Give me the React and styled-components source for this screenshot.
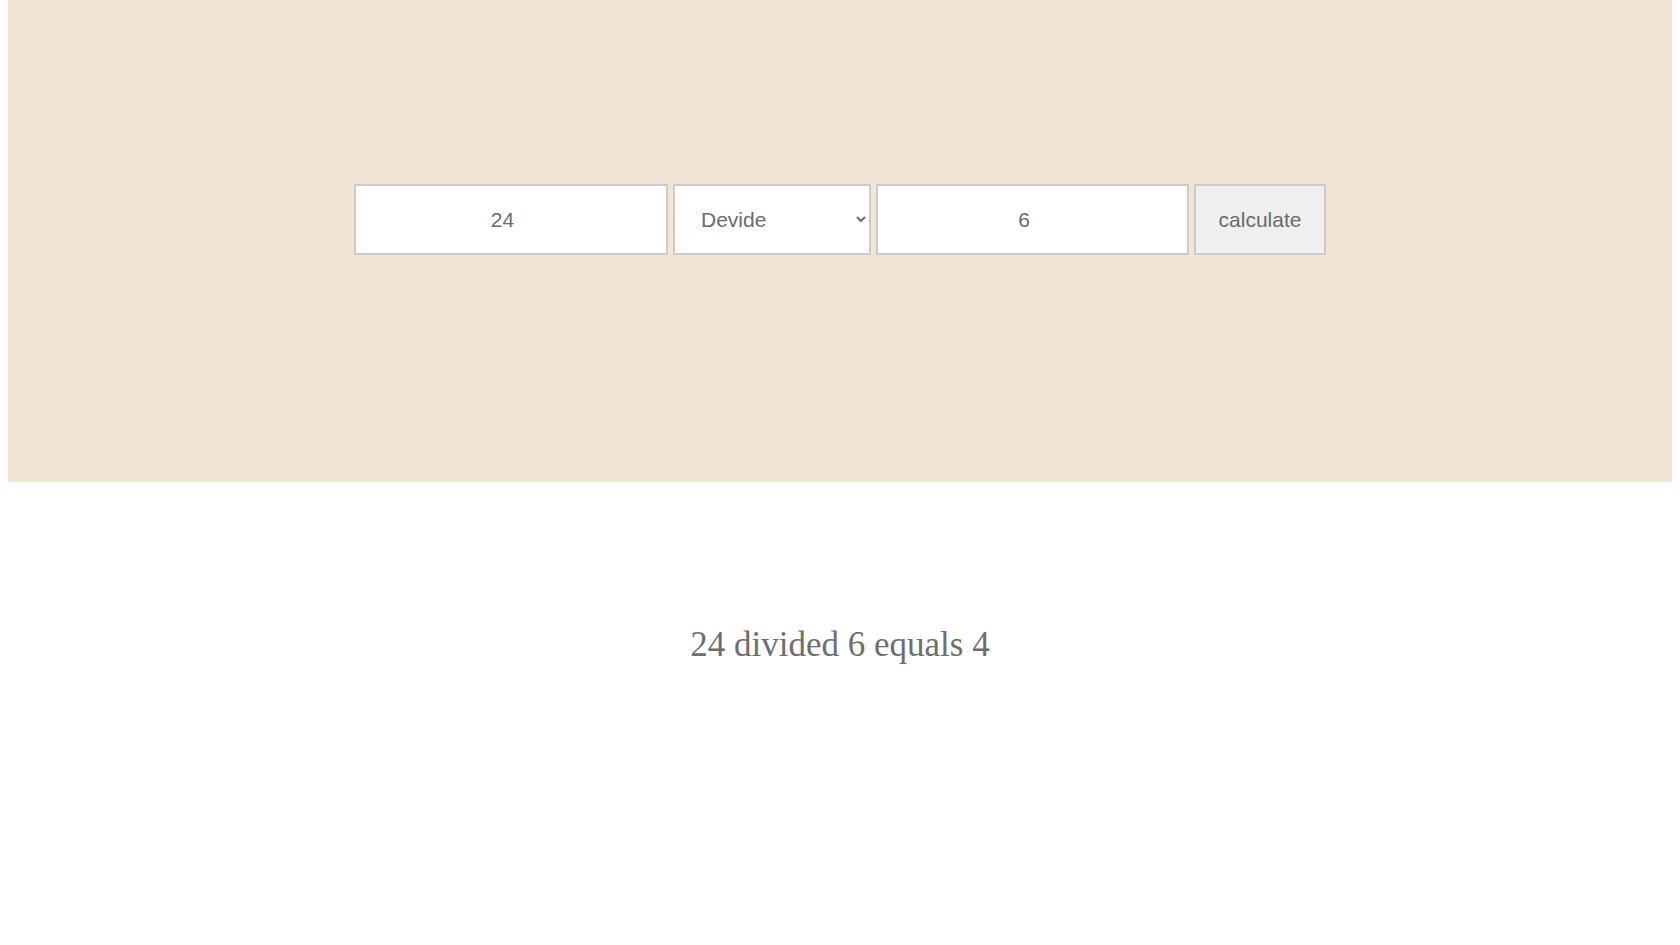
import React, { useState } from "react";
import styled, { createGlobalStyle } from "styled-components";

const GlobalStyle = createGlobalStyle`
  body {
    margin: 0 8px;
    background: #fff;
    font-family: "Liberation Sans", Arial, sans-serif;
  }
`;

const Panel = styled.div`
  height: 482px;
  box-sizing: border-box;
  padding-top: 184px;
  background-color: #f1e6d5;
  display: flex;
  justify-content: center;
  align-items: flex-start;
  gap: 5px;
`;

const Field = styled.input`
  box-sizing: border-box;
  width: ${(p) => p.$width || 314}px;
  height: 71px;
  border: 2px solid #cbcbcb;
  background: #fff;
  color: #6b6b6b;
  font-family: "Liberation Sans", Arial, sans-serif;
  font-size: 21px;
  text-align: center;
  padding: 0 19px 0 2px;
  outline: none;
`;

const Select = styled.select`
  box-sizing: border-box;
  width: 198px;
  height: 71px;
  border: 2px solid #cbcbcb;
  border-radius: 0;
  background: #fff;
  color: #6b6b6b;
  font-family: "Liberation Sans", Arial, sans-serif;
  font-size: 21px;
  padding: 0 4px 0 22px;
  outline: none;
`;

const Button = styled.button`
  box-sizing: border-box;
  width: 132px;
  height: 71px;
  border: 2px solid #cbcbcb;
  border-radius: 0;
  background-color: #efefef;
  color: #6b6b6b;
  font-family: "Liberation Sans", Arial, sans-serif;
  font-size: 21px;
  cursor: pointer;
`;

const Result = styled.p`
  margin: 143px 0 0;
  text-align: center;
  font-family: "Liberation Serif", "Times New Roman", serif;
  font-size: 35px;
  color: #6e6e6e;
`;

const ops = {
  add: { label: "Add", word: "plus", fn: (a, b) => a + b },
  subtract: { label: "Subtract", word: "minus", fn: (a, b) => a - b },
  multiply: { label: "Multiply", word: "times", fn: (a, b) => a * b },
  divide: { label: "Devide", word: "divided", fn: (a, b) => a / b },
};

export default function App() {
  const [first, setFirst] = useState("24");
  const [second, setSecond] = useState("6");
  const [op, setOp] = useState("divide");
  const [result, setResult] = useState("24 divided 6 equals 4");

  const calculate = () => {
    const a = Number(first);
    const b = Number(second);
    setResult(`${a} ${ops[op].word} ${b} equals ${ops[op].fn(a, b)}`);
  };

  return (
    <>
      <GlobalStyle />
      <Panel>
        <Field value={first} onChange={(e) => setFirst(e.target.value)} />
        <Select value={op} onChange={(e) => setOp(e.target.value)}>
          {Object.entries(ops).map(([key, o]) => (
            <option key={key} value={key}>
              {o.label}
            </option>
          ))}
        </Select>
        <Field $width={313} value={second} onChange={(e) => setSecond(e.target.value)} />
        <Button onClick={calculate}>calculate</Button>
      </Panel>
      <Result>{result}</Result>
    </>
  );
}
